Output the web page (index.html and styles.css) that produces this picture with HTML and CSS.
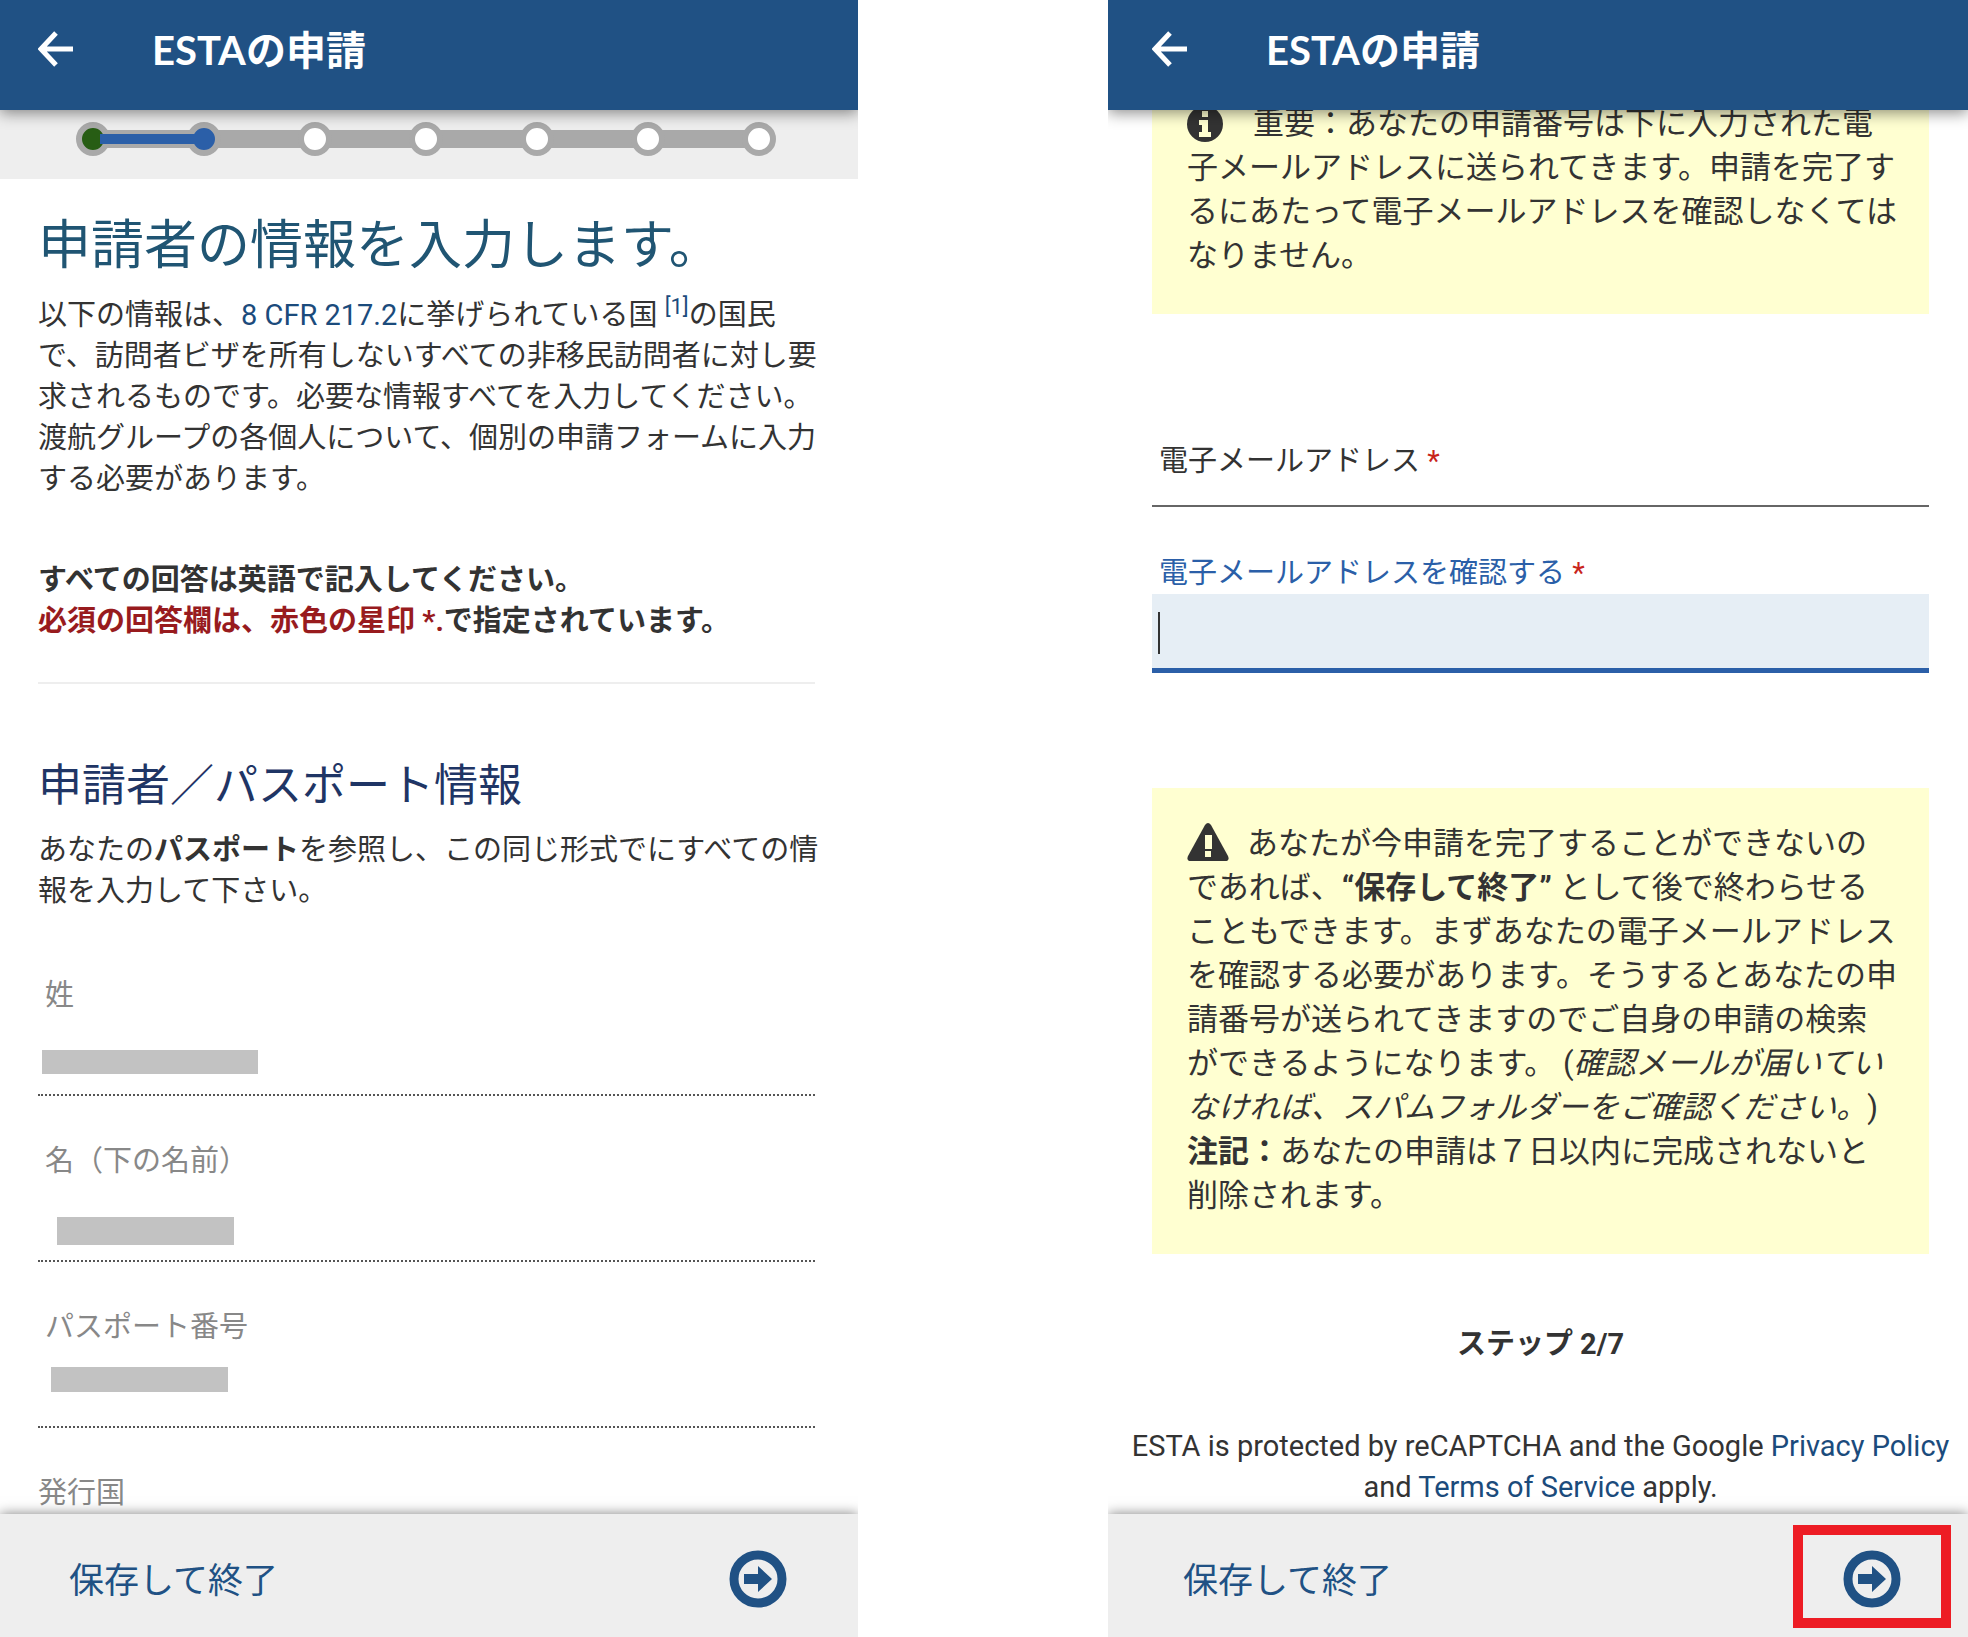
FILE: index.html
```html
<!DOCTYPE html>
<html lang="ja">
<head>
<meta charset="utf-8">
<meta name="viewport" content="width=device-width, initial-scale=1">
<title>ESTAの申請</title>
<link rel="stylesheet" href="styles.css">
</head>
<body>
<main class="screens">
  <section class="screen">
    <header class="topbar">
      <button class="back" type="button" aria-label="戻る">
        <svg viewBox="0 0 36 36" width="36" height="36"><path d="M18 2 3 18l15 16M3 18h32" fill="none" stroke="#fff" stroke-width="5"/></svg>
      </button>
      <h2 class="topbar-title">ESTAの申請</h2>
    </header>
    <div class="progress">
      <svg class="progress-track" viewBox="0 0 702 36" role="img" aria-label="ステップ 2/7">
        <path d="M18 18H684" stroke="#a9a9a9" stroke-width="18"/>
        <g fill="#fff" stroke="#a9a9a9" stroke-width="6">
          <circle cx="18" cy="18" r="14" fill="#275d14"/>
          <circle cx="129" cy="18" r="14" fill="#2b5fa8"/>
          <circle cx="240" cy="18" r="14"/>
          <circle cx="351" cy="18" r="14"/>
          <circle cx="462" cy="18" r="14"/>
          <circle cx="573" cy="18" r="14"/>
          <circle cx="684" cy="18" r="14"/>
        </g>
        <path d="M25 18H129" stroke="#2b5fa8" stroke-width="10"/>
      </svg>
    </div>
    <div class="content">
      <h1 class="page-title">申請者の情報を入力します。</h1>
      <p class="text">以下の情報は、<a href="#cfr">8 CFR 217.2</a>に挙げられている国 <sup><a href="#note1">[1]</a></sup>の国民<br>で、訪問者ビザを所有しないすべての非移民訪問者に対し要求されるものです。必要な情報すべてを入力してください。渡航グループの各個人について、個別の申請フォームに入力する必要があります。</p>
      <p class="text notice">すべての回答は英語で記入してください。<br><span class="required-note">必須の回答欄は、赤色の星印 *.</span>で指定されています。</p>
      <hr class="rule">
      <h2 class="section-title">申請者／パスポート情報</h2>
      <p class="text">あなたの<b>パスポート</b>を参照し、この同じ形式でにすべての情報を入力して下さい。</p>
      <dl class="details">
        <div class="detail">
          <dt>姓</dt>
          <dd><span class="mask mask-surname"></span></dd>
        </div>
        <div class="detail">
          <dt>名（下の名前）</dt>
          <dd><span class="mask mask-given"></span></dd>
        </div>
        <div class="detail">
          <dt>パスポート番号</dt>
          <dd><span class="mask mask-passport"></span></dd>
        </div>
        <div class="detail detail-flush">
          <dt>発行国</dt>
        </div>
      </dl>
    </div>
    <footer class="bottombar">
      <button class="save" type="button">保存して終了</button>
      <button class="next" type="button" aria-label="次へ">
        <svg viewBox="0 0 58 58" width="58" height="58"><circle cx="29" cy="29" r="24" fill="none" stroke="#205184" stroke-width="9"/><path d="M15 24h14v-8l14 13-14 13v-8H15z" fill="#205184"/></svg>
      </button>
    </footer>
  </section>

  <section class="screen screen-wide">
    <header class="topbar">
      <button class="back" type="button" aria-label="戻る">
        <svg viewBox="0 0 36 36" width="36" height="36"><path d="M18 2 3 18l15 16M3 18h32" fill="none" stroke="#fff" stroke-width="5"/></svg>
      </button>
      <h2 class="topbar-title">ESTAの申請</h2>
    </header>
    <div class="content">
      <p class="alert alert-info"><svg class="icon-info" viewBox="0 0 36 36" width="36" height="36"><circle cx="18" cy="18" r="18" fill="#333"/><path d="M15 5h6v6h-6zM12 14h9v12h3v5H12v-5h3v-7h-3z" fill="#ffffd1"/></svg>重要：あなたの申請番号は下に入力された電<br>子メールアドレスに送られてきます。申請を完了するにあたって電子メールアドレスを確認しなくてはなりません。</p>
      <form class="form">
        <div class="field">
          <label for="email">電子メールアドレス <span class="star">*</span></label>
          <input class="input" id="email" type="email">
        </div>
        <div class="field field-active">
          <label for="email2">電子メールアドレスを確認する <span class="star">*</span></label>
          <div class="input-wrap"><span class="caret"></span><input class="input" id="email2" type="email"></div>
        </div>
      </form>
      <p class="alert"><svg class="icon-warn" viewBox="0 0 42 38" width="42" height="38"><path d="M18 2q3-4 6 0l17 31q2 5-3 5H4q-5 0-3-5z" fill="#333"/><path d="M18 12h7v14h-7zM18 28h6v6h-6z" fill="#ffffd1"/></svg>あなたが今申請を完了することができないの<br>であれば、<b>“保存して終了”</b> として後で終わらせる<br>こともできます。まずあなたの電子メールアドレスを確認する必要があります。そうするとあなたの申請番号が送られてきますのでご自身の申請の検索<br>ができるようになります。 (<i>確認メールが届いてい<br>なければ、スパムフォルダーをご確認ください。</i>)<br><b>注記：</b>あなたの申請は７日以内に完成されないと<br>削除されます。</p>
      <p class="step">ステップ 2/7</p>
      <p class="legal">ESTA is protected by reCAPTCHA and the Google <a href="#privacy">Privacy Policy</a> and <a href="#terms">Terms of Service</a> apply.</p>
    </div>
    <footer class="bottombar">
      <button class="save" type="button">保存して終了</button>
      <button class="next next-marked" type="button" aria-label="次へ">
        <svg viewBox="0 0 58 58" width="58" height="58"><circle cx="29" cy="29" r="24" fill="none" stroke="#205184" stroke-width="9"/><path d="M15 24h14v-8l14 13-14 13v-8H15z" fill="#205184"/></svg>
      </button>
    </footer>
  </section>
</main>
</body>
</html>
```

FILE: styles.css
```css
* {
  box-sizing: border-box;
}

body {
  margin: 0;
  background: #fff;
  color: #333;
  font-family: Roboto, "Noto Sans CJK JP", sans-serif;
  font-size: 29px;
  line-height: 41px;
  text-spacing-trim: space-all;
}

h1, h2, p, dl, dd {
  margin: 0;
}

a {
  color: #1b4b7c;
  text-decoration: none;
}

button {
  padding: 0;
  border: 0;
  background: none;
  color: inherit;
  font: inherit;
}

svg {
  display: block;
}

.screens {
  display: grid;
  grid-template-columns: 858fr 860fr;
  gap: 250px;
  height: 100vh;
}

.screen {
  display: flex;
  flex-direction: column;
  min-width: 0;
  min-height: 0;
}

.topbar {
  display: flex;
  flex: none;
  align-items: center;
  gap: 78px;
  height: 110px;
  padding: 0 38px 13px;
  background: #205184;
  color: #fff;
  box-shadow: 0 3px 14px rgba(0, 0, 0, 0.45);
  clip-path: inset(0 0 -30px 0);
  z-index: 1;
}

.topbar-title {
  padding-top: 4px;
  font-family: Lato, "Noto Sans CJK JP", sans-serif;
  font-size: 40px;
  font-weight: 700;
}

.progress {
  flex: none;
  padding: 11px 81px 22px 75px;
  background: #eee;
}

.progress-track {
  width: 100%;
}

.content {
  flex: 1;
  min-height: 0;
  padding: 0 43px 0 38px;
  overflow: hidden;
}

.page-title {
  padding: 35px 0 17px;
  color: #205573;
  font-size: 53px;
  font-weight: 400;
  line-height: 64px;
}

.text {
  margin-right: -7px;
}

.text sup {
  font-size: 22px;
  line-height: 0;
}

.notice {
  padding-top: 60px;
  font-weight: 700;
}

.required-note {
  color: #981b1e;
}

.rule {
  height: 2px;
  margin: 40px 0 72px;
  border: 0;
  background: #eee;
}

.section-title {
  padding-bottom: 14px;
  color: #1f3565;
  font-size: 44px;
  font-weight: 400;
  line-height: 60px;
}

.details {
  padding-top: 63px;
}

.detail {
  height: 121px;
  margin-bottom: 45px;
  padding-left: 7px;
  border-bottom: 2px dotted #555;
  color: #888;
}

.detail-flush {
  padding-left: 0;
  border: 0;
}

.mask {
  display: block;
  background: #c2c2c2;
}

.mask-surname {
  width: 216px;
  height: 24px;
  margin: 34px 0 0 -3px;
}

.mask-given {
  width: 177px;
  height: 28px;
  margin: 35px 0 0 12px;
}

.mask-passport {
  width: 177px;
  height: 25px;
  margin: 19px 0 0 6px;
}

.bottombar {
  display: flex;
  flex: none;
  align-items: center;
  justify-content: space-between;
  height: 123px;
  padding: 2px 21px 0 69px;
  background: #eee;
  color: #205184;
  box-shadow: 0 0 12px rgba(0, 0, 0, 0.5);
  clip-path: inset(-20px 0 0 0);
  z-index: 1;
}

.save {
  padding-top: 11px;
  font-size: 35px;
  line-height: 50px;
}

.next {
  display: flex;
  align-items: center;
  justify-content: center;
  width: 158px;
  height: 103px;
  padding-top: 5px;
  border: 10px solid transparent;
}

.next-marked {
  border-color: #ed1c24;
}

.screen-wide .topbar {
  padding-left: 44px;
}

.screen-wide .content {
  padding-left: 44px;
  padding-right: 39px;
}

.screen-wide .bottombar {
  padding-left: 75px;
  padding-right: 17px;
}

.alert {
  padding: 34px 28px 36px 35px;
  background: #ffffd1;
  font-size: 31px;
  line-height: 44px;
}

.alert svg {
  display: inline-block;
}

.alert-info {
  padding-top: 0;
  margin-top: -8px;
}

.icon-info {
  margin-right: 30px;
  vertical-align: -8px;
}

.icon-warn {
  margin-right: 18px;
  vertical-align: -7px;
}

.form {
  padding: 127px 0 115px;
}

.field label {
  display: block;
  padding-left: 7px;
}

.star {
  color: #c9241b;
}

.input {
  display: block;
  width: 100%;
  height: 25px;
  padding: 0 7px;
  border: 0;
  border-bottom: 2px solid #666;
  background: none;
  font: inherit;
}

.field-active {
  padding-top: 46px;
}

.field-active label {
  color: #2b5fa8;
}

.field-active .input {
  height: 79px;
  border-bottom: 5px solid #2b5fa8;
  background: #e6eef5;
}

.input-wrap {
  position: relative;
}

.caret {
  position: absolute;
  left: 6px;
  top: 18px;
  width: 2px;
  height: 42px;
  background: #333;
}

.step {
  padding: 70px 0 61px;
  font-weight: 700;
  text-align: center;
}

.legal {
  margin: 0 -28px;
  text-align: center;
}
```
